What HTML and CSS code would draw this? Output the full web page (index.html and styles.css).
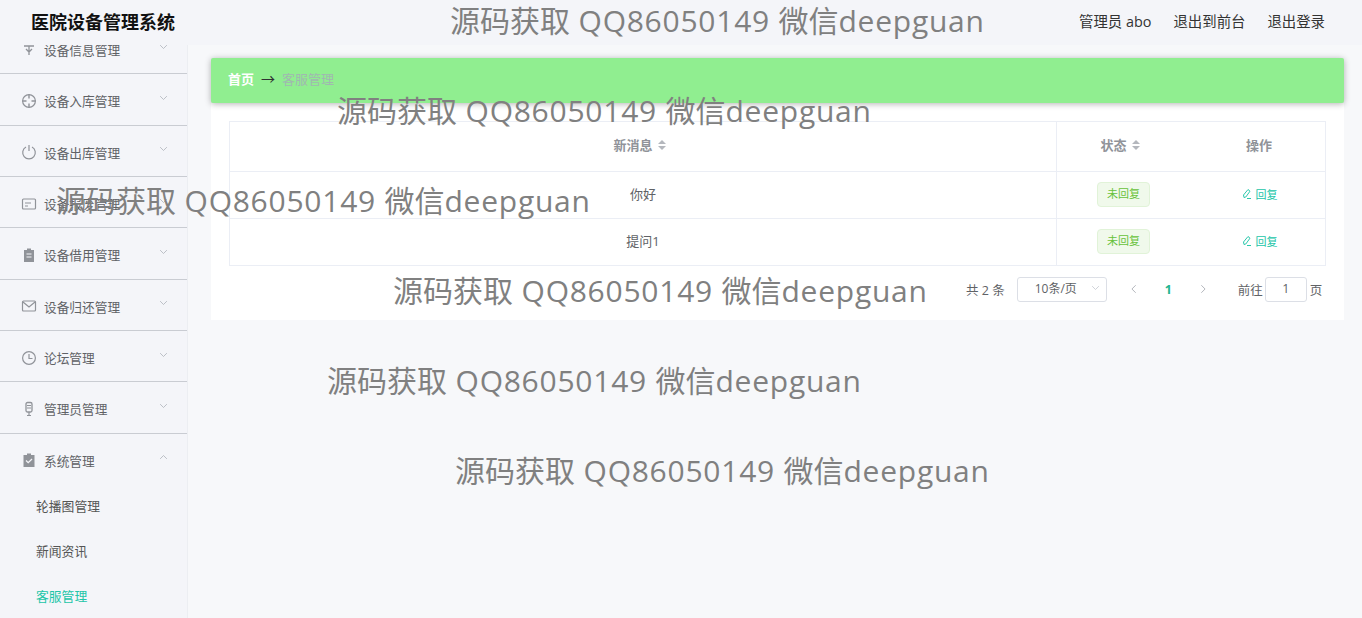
FILE: index.html
```html
<!DOCTYPE html>
<html lang="zh-CN">
<head>
    <meta charset="UTF-8">
    <meta name="viewport" content="width=device-width, initial-scale=1.0">
    <title>医院设备管理系统</title>
    <link rel="stylesheet" href="styles.css">
</head>
<body>
    <div class="app">
        <div class="topbar">
            <div class="logo">医院设备管理系统</div>
            <div class="top-links">
                <span>管理员 abo</span>
                <span>退出到前台</span>
                <span>退出登录</span>
            </div>
        </div>

        <div class="layout">
            <div class="sidebar">
                <ul class="menu">
                    <li class="menu-item">
                        <svg class="menu-icon" viewBox="0 0 16 16"><path d="M3 4h10M8 4v9M5 7l3 3 3-3" fill="none" stroke="#909399" stroke-width="1.3"/></svg>
                        <span>设备信息管理</span>
                        <svg class="arrow" viewBox="0 0 12 8"><path d="M1.5 1.5 6 6l4.5-4.5" /></svg>
                    </li>
                    <li class="menu-item">
                        <svg class="menu-icon" viewBox="0 0 16 16"><circle cx="8" cy="8" r="6.4" fill="none" stroke="#909399" stroke-width="1.2"/><path d="M8 1.5v4M8 10.5v4M1.5 8h4M10.5 8h4" stroke="#909399" stroke-width="1.4"/></svg>
                        <span>设备入库管理</span>
                        <svg class="arrow" viewBox="0 0 12 8"><path d="M1.5 1.5 6 6l4.5-4.5" /></svg>
                    </li>
                    <li class="menu-item">
                        <svg class="menu-icon" viewBox="0 0 16 16"><path d="M5 3a6.3 6.3 0 1 0 6 0M8 1v6" fill="none" stroke="#909399" stroke-width="1.2"/></svg>
                        <span>设备出库管理</span>
                        <svg class="arrow" viewBox="0 0 12 8"><path d="M1.5 1.5 6 6l4.5-4.5" /></svg>
                    </li>
                    <li class="menu-item">
                        <svg class="menu-icon" viewBox="0 0 16 16"><rect x="1.5" y="3" width="13" height="10" rx="1" fill="none" stroke="#909399" stroke-width="1.2"/><path d="M4 7h6M4 10h3" stroke="#909399" stroke-width="1.2"/></svg>
                        <span>设备报废管理</span>
                        <svg class="arrow" viewBox="0 0 12 8"><path d="M1.5 1.5 6 6l4.5-4.5" /></svg>
                    </li>
                    <li class="menu-item">
                        <svg class="menu-icon" viewBox="0 0 16 16"><path d="M3 3h3V1.5h4V3h3v12H3z" fill="#909399"/><path d="M5.5 7h5M5.5 10h5" stroke="#f4f5f9" stroke-width="1.2"/></svg>
                        <span>设备借用管理</span>
                        <svg class="arrow" viewBox="0 0 12 8"><path d="M1.5 1.5 6 6l4.5-4.5" /></svg>
                    </li>
                    <li class="menu-item">
                        <svg class="menu-icon" viewBox="0 0 16 16"><rect x="1.5" y="3" width="13" height="10" rx="1" fill="none" stroke="#909399" stroke-width="1.2"/><path d="M2 4l6 5 6-5" fill="none" stroke="#909399" stroke-width="1.2"/></svg>
                        <span>设备归还管理</span>
                        <svg class="arrow" viewBox="0 0 12 8"><path d="M1.5 1.5 6 6l4.5-4.5" /></svg>
                    </li>
                    <li class="menu-item">
                        <svg class="menu-icon" viewBox="0 0 16 16"><circle cx="8" cy="8" r="6.4" fill="none" stroke="#909399" stroke-width="1.2"/><path d="M8 4v4.5h3.5" fill="none" stroke="#909399" stroke-width="1.2"/></svg>
                        <span>论坛管理</span>
                        <svg class="arrow" viewBox="0 0 12 8"><path d="M1.5 1.5 6 6l4.5-4.5" /></svg>
                    </li>
                    <li class="menu-item">
                        <svg class="menu-icon" viewBox="0 0 16 16"><rect x="5" y="1.5" width="6" height="9.5" rx="1.5" fill="none" stroke="#909399" stroke-width="1.3"/><path d="M6 4.5h4M6 7h4M8 11v3.5M6 14.5h4" stroke="#909399" stroke-width="1.2"/></svg>
                        <span>管理员管理</span>
                        <svg class="arrow" viewBox="0 0 12 8"><path d="M1.5 1.5 6 6l4.5-4.5" /></svg>
                    </li>
                    <li class="menu-item open">
                        <svg class="menu-icon" viewBox="0 0 16 16"><path d="M2.5 3h3.5V1.5h4V3h3.5v12h-11z" fill="#909399"/><path d="M5 8.5l2.2 2.2L11 7" fill="none" stroke="#f4f5f9" stroke-width="1.3"/></svg>
                        <span>系统管理</span>
                        <svg class="arrow" viewBox="0 0 12 8"><path d="M1.5 6.5 6 2l4.5 4.5" /></svg>
                    </li>
                    <li class="sub-item">轮播图管理</li>
                    <li class="sub-item">新闻资讯</li>
                    <li class="sub-item active">客服管理</li>
                </ul>
            </div>

            <div class="main">
                <div class="breadcrumb">
                    <span class="crumb-home">首页</span>
                    <span class="crumb-sep">→</span>
                    <span class="crumb-current">客服管理</span>
                </div>

                <div class="card">
                    <div class="table">
                        <div class="row head">
                            <div class="cell col-msg"><span class="shift-msg">新消息</span><span class="sort"></span></div>
                            <div class="cell col-status"><span class="shift-status">状态</span><span class="sort"></span></div>
                            <div class="cell col-action">操作</div>
                        </div>
                        <div class="row">
                            <div class="cell col-msg">你好</div>
                            <div class="cell col-status"><span class="tag">未回复</span></div>
                            <div class="cell col-action">
                                <span class="reply"><svg class="reply-icon" viewBox="0 0 12 12"><path d="M3 9.5 2.5 7 7 1.5l2 1.7L4.8 9zM6 10.5h4" fill="none" stroke="#13c2a3" stroke-width="0.9"/></svg>回复</span>
                            </div>
                        </div>
                        <div class="row">
                            <div class="cell col-msg">提问1</div>
                            <div class="cell col-status"><span class="tag">未回复</span></div>
                            <div class="cell col-action">
                                <span class="reply"><svg class="reply-icon" viewBox="0 0 12 12"><path d="M3 9.5 2.5 7 7 1.5l2 1.7L4.8 9zM6 10.5h4" fill="none" stroke="#13c2a3" stroke-width="0.9"/></svg>回复</span>
                            </div>
                        </div>
                    </div>

                    <div class="pager">
                        <span class="total">共 2 条</span>
                        <div class="size-select">
                            <span>10条/页</span>
                            <svg class="select-arrow" viewBox="0 0 12 8"><path d="M1.5 1.5 6 6l4.5-4.5" /></svg>
                        </div>
                        <svg class="page-arrow prev" viewBox="0 0 8 12"><path d="M6 1.5 1.5 6 6 10.5" /></svg>
                        <span class="page-num">1</span>
                        <svg class="page-arrow next" viewBox="0 0 8 12"><path d="M2 1.5 6.5 6 2 10.5" /></svg>
                        <span class="jump">前往</span>
                        <div class="page-input">1</div>
                        <span class="jump-end">页</span>
                    </div>
                </div>
            </div>
        </div>

        <div class="watermark wm-1">源码获取<span class="wm-latin"> QQ86050149 </span>微信<span class="wm-latin">deepguan</span></div>
        <div class="watermark wm-2">源码获取<span class="wm-latin"> QQ86050149 </span>微信<span class="wm-latin">deepguan</span></div>
        <div class="watermark wm-3">源码获取<span class="wm-latin"> QQ86050149 </span>微信<span class="wm-latin">deepguan</span></div>
        <div class="watermark wm-4">源码获取<span class="wm-latin"> QQ86050149 </span>微信<span class="wm-latin">deepguan</span></div>
        <div class="watermark wm-5">源码获取<span class="wm-latin"> QQ86050149 </span>微信<span class="wm-latin">deepguan</span></div>
        <div class="watermark wm-6">源码获取<span class="wm-latin"> QQ86050149 </span>微信<span class="wm-latin">deepguan</span></div>
    </div>
</body>
</html>
```

FILE: styles.css
```css
* {
    margin: 0;
    padding: 0;
    box-sizing: border-box;
}

html, body {
    height: 100%;
    overflow: hidden;
}

body {
    font-family: "Open Sans", "Noto Sans CJK SC", sans-serif;
    background: #f7f8fa;
    color: #606266;
}

.app {
    position: relative;
    width: 1362px;
    height: 618px;
    overflow: hidden;
}

.topbar {
    display: flex;
    justify-content: space-between;
    align-items: center;
    height: 45px;
    padding-bottom: 5px;
    background: #f4f5f9;
}

.logo {
    margin-top: 2px;
    padding-left: 31px;
    font-size: 18px;
    font-weight: 700;
    color: #111;
}

.top-links {
    display: flex;
    gap: 22px;
    padding-right: 37px;
    font-size: 14.4px;
    color: #333;
}

.layout {
    display: flex;
    height: 573px;
}

.sidebar {
    width: 188px;
    flex-shrink: 0;
    overflow: hidden;
    background: #f4f5f9;
    border-right: 1px solid #eceef2;
}

.menu {
    list-style: none;
    margin-top: -22px;
}

.menu-item {
    display: flex;
    align-items: center;
    height: 51.33px;
    padding: 3px 0 0 21px;
    border-bottom: 1px solid #c9ccd2;
    font-size: 12.7px;
    color: #606266;
}

.menu-item.open {
    height: 50px;
    border-bottom: none;
}

.menu-icon {
    width: 16px;
    height: 16px;
    margin-right: 7px;
}

.arrow {
    width: 9px;
    height: 6px;
    margin-left: auto;
    margin-right: 19px;
    margin-bottom: 6px;
    fill: none;
    stroke: #a9adb5;
    stroke-width: 1;
}

.sub-item {
    height: 45px;
    line-height: 44px;
    padding-left: 36px;
    font-size: 12.8px;
    color: #555;
}

.sub-item.active {
    color: #22c5a8;
}

.main {
    flex: 1;
    padding: 13px 18px 0 23px;
}

.breadcrumb {
    display: flex;
    align-items: center;
    height: 45px;
    padding: 0 0 5px 17px;
    background: #90ee90;
    border-radius: 2px;
    box-shadow: 0 1px 6px rgba(0, 0, 0, 0.3);
    font-size: 13px;
    position: relative;
}

.crumb-home {
    font-weight: 700;
    color: #fff;
}

.crumb-sep {
    margin: 0 7px;
    font-size: 14px;
    color: #303133;
}

.crumb-current {
    color: #a0b8b0;
}

.card {
    height: 217px;
    padding: 18px 18px 0;
    background: #fff;
}

.table {
    border: 1px solid #ebeef5;
    border-bottom: none;
}

.row {
    display: flex;
    height: 47px;
    border-bottom: 1px solid #ebeef5;
    font-size: 13px;
    color: #606266;
}

.row.head {
    height: 50px;
    font-weight: 700;
    color: #909399;
}

.cell {
    display: flex;
    align-items: center;
    justify-content: center;
    padding-bottom: 4px;
}

.col-msg {
    width: 827px;
    border-right: 1px solid #ebeef5;
}

.shift-msg {
    margin-left: -7px;
}

.shift-status {
    margin-left: -3px;
}

.col-status {
    width: 129px;
}

.col-action {
    flex: 1;
    padding-left: 7px;
}

.sort {
    position: relative;
    width: 8px;
    height: 10px;
    margin-left: 5px;
}

.sort::before,
.sort::after {
    content: "";
    position: absolute;
    left: 0;
    border-left: 4px solid transparent;
    border-right: 4px solid transparent;
}

.sort::before {
    top: 0;
    border-bottom: 4px solid #b4b7bd;
}

.sort::after {
    bottom: 0;
    border-top: 4px solid #b4b7bd;
}

.tag {
    display: flex;
    align-items: center;
    justify-content: center;
    width: 53px;
    height: 25px;
    margin-left: 4px;
    margin-top: 3px;
    padding-bottom: 3px;
    background: #f0f9eb;
    border: 1px solid #e1f3d8;
    border-radius: 4px;
    font-size: 11px;
    color: #67c23a;
}

.reply {
    display: flex;
    align-items: center;
    margin-top: 2px;
    font-size: 11px;
    color: #22c5a8;
}

.reply-icon {
    width: 12px;
    height: 12px;
    margin-right: 3px;
}

.pager {
    display: flex;
    align-items: center;
    height: 26px;
    margin-top: 10px;
    font-size: 12.5px;
    color: #606266;
    white-space: nowrap;
}

.pager > * {
    flex-shrink: 0;
}

.total {
    margin-left: 737px;
    margin-right: 12px;
}

.size-select {
    display: flex;
    align-items: center;
    justify-content: space-between;
    width: 90px;
    height: 25px;
    padding: 0 6px 2px 17px;
    border: 1px solid #dcdfe6;
    border-radius: 3px;
    font-size: 12px;
}

.select-arrow {
    width: 9px;
    height: 6px;
    fill: none;
    stroke: #c0c4cc;
    stroke-width: 1;
}

.page-arrow {
    width: 8px;
    height: 10px;
    fill: none;
    stroke: #b4b7bd;
    stroke-width: 1.2;
}

.prev {
    margin-left: 23px;
}

.page-num {
    margin-left: 27px;
    font-weight: 700;
    color: #22b58f;
}

.next {
    margin-left: 27px;
}

.jump {
    margin-left: 31px;
}

.page-input {
    width: 42px;
    height: 25px;
    line-height: 22px;
    margin-left: 2px;
    border: 1px solid #dcdfe6;
    border-radius: 3px;
    text-align: center;
}

.jump-end {
    margin-left: 3px;
}

.watermark {
    position: absolute;
    font-size: 30px;
    line-height: 40px;
    white-space: pre;
    color: #808080;
}

.wm-latin {
    letter-spacing: 0.75px;
}

.wm-1 { left: 450px; top: 1px; }
.wm-2 { left: 337px; top: 91px; }
.wm-3 { left: 56px; top: 181px; }
.wm-4 { left: 393px; top: 271px; }
.wm-5 { left: 327px; top: 361px; }
.wm-6 { left: 455px; top: 451px; }
```
